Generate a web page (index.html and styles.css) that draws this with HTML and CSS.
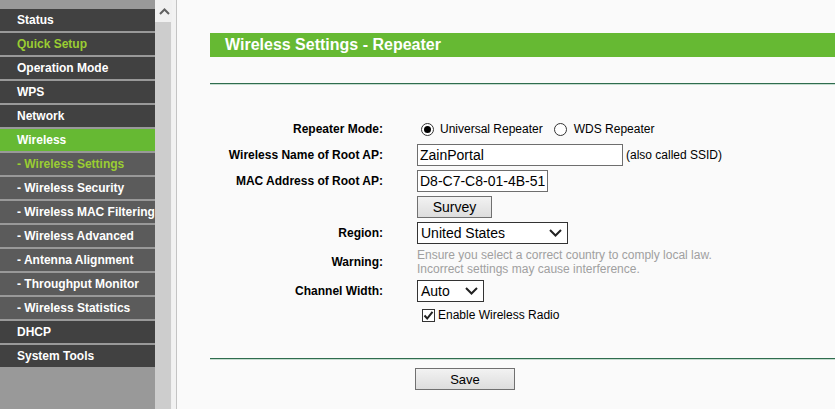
FILE: index.html
```html
<!DOCTYPE html>
<html lang="en">
<head>
  <meta charset="UTF-8" />
  <title>Wireless Settings - Repeater</title>
  <link rel="stylesheet" href="styles.css">
</head>
<body>
  <aside class="frame-left">
    <nav class="menu">
      <a class="item">Status</a>
      <a class="item hl">Quick Setup</a>
      <a class="item">Operation Mode</a>
      <a class="item">WPS</a>
      <a class="item">Network</a>
      <a class="item active">Wireless</a>
      <a class="item sub hl">- Wireless Settings</a>
      <a class="item sub">- Wireless Security</a>
      <a class="item sub">- Wireless MAC Filtering</a>
      <a class="item sub">- Wireless Advanced</a>
      <a class="item sub">- Antenna Alignment</a>
      <a class="item sub">- Throughput Monitor</a>
      <a class="item sub">- Wireless Statistics</a>
      <a class="item">DHCP</a>
      <a class="item">System Tools</a>
    </nav>
    <div class="scrollbar">
      <div class="scroll-up">
        <svg width="11" height="7" viewBox="0 0 11 7"><path d="M1 6 L5.5 1.5 L10 6" fill="none" stroke="#606060" stroke-width="2"/></svg>
      </div>
      <div class="scroll-thumb"></div>
    </div>
    <div class="frame-gap"></div>
  </aside>

  <main class="content">
    <h1 class="title">Wireless Settings - Repeater</h1>
    <div class="rule"></div>

    <form class="form">
      <label class="lbl">Repeater Mode:</label>
      <div class="ctl">
        <span class="radio checked"></span><span class="opt">Universal Repeater</span>
        <span class="radio second"></span><span class="opt">WDS Repeater</span>
      </div>

      <label class="lbl">Wireless Name of Root AP:</label>
      <div class="ctl">
        <input class="txt txt-name" type="text" value="ZainPortal" />
        <span class="note">(also called SSID)</span>
      </div>

      <label class="lbl">MAC Address of Root AP:</label>
      <div class="ctl">
        <input class="txt txt-mac" type="text" value="D8-C7-C8-01-4B-51" />
      </div>

      <span></span>
      <div class="ctl">
        <button type="button" class="btn btn-survey">Survey</button>
      </div>

      <label class="lbl">Region:</label>
      <div class="ctl">
        <div class="sel sel-region">
          <span>United States</span>
          <svg width="13" height="8" viewBox="0 0 13 8"><path d="M1 1 L6.5 6.5 L12 1" fill="none" stroke="#222" stroke-width="2"/></svg>
        </div>
      </div>

      <label class="lbl">Warning:</label>
      <div class="ctl warn">
        Ensure you select a correct country to comply local law.<br>
        Incorrect settings may cause interference.
      </div>

      <label class="lbl">Channel Width:</label>
      <div class="ctl">
        <div class="sel sel-width">
          <span>Auto</span>
          <svg width="13" height="8" viewBox="0 0 13 8"><path d="M1 1 L6.5 6.5 L12 1" fill="none" stroke="#222" stroke-width="2"/></svg>
        </div>
      </div>

      <span></span>
      <div class="ctl ctl-check">
        <span class="check">
          <svg width="11" height="11" viewBox="0 0 11 11"><path d="M1.5 5.5 L4.2 8.5 L9.5 1.8" fill="none" stroke="#222" stroke-width="2"/></svg>
        </span><span class="opt">Enable Wireless Radio</span>
      </div>
    </form>

    <div class="rule rule-bottom"></div>
    <div class="actions">
      <button type="button" class="btn btn-save">Save</button>
    </div>
  </main>
</body>
</html>
```

FILE: styles.css
```css
* {
  box-sizing: border-box;
}
html, body {
  height: 100%;
}
body {
  margin: 0;
  display: flex;
  overflow: hidden;
  background: #fafafa;
  font-family: "Liberation Sans", Arial, sans-serif;
  font-size: 12px;
  color: #000;
}

/* left frame */
.frame-left {
  display: flex;
  flex: 0 0 177px;
  border-right: 1px solid #c4c4c4;
}
.menu {
  width: 155px;
  background: #999;
  padding-top: 9px;
  display: flex;
  flex-direction: column;
  gap: 2px;
}
.item {
  display: block;
  height: 22px;
  line-height: 22px;
  padding-left: 17px;
  background: #414141;
  color: #fff;
  font-weight: bold;
  white-space: nowrap;
  overflow: hidden;
}
.item.sub {
  background: #5b5b5b;
}
.item.active {
  background: #66b933;
}
.item.hl {
  color: #9acd32;
}
.scrollbar {
  width: 17px;
  display: flex;
  flex-direction: column;
  background: #f0f0f0;
}
.scroll-up {
  height: 22px;
  display: flex;
  align-items: center;
  justify-content: center;
  padding-left: 1px;
}
.scroll-thumb {
  flex: 1;
  margin-right: 1px;
  background: #cdcdcd;
}
.frame-gap {
  width: 4px;
  background: #f2f2f2;
}

/* content */
.content {
  flex: 1;
  padding: 33px 0 0 33px;
}
.title {
  margin: 0;
  height: 24px;
  line-height: 24px;
  padding-left: 15px;
  background: #66b933;
  color: #fff;
  font-size: 16px;
  font-weight: bold;
}
.rule {
  margin-top: 26px;
  height: 2px;
  border-top: 1px solid #2f6c4e;
  border-bottom: 1px solid #c5dccf;
}
.form {
  display: grid;
  grid-template-columns: 173px 1fr;
  column-gap: 34px;
  row-gap: 4px;
  align-items: center;
  margin-top: 33px;
}
.lbl {
  text-align: right;
  font-weight: bold;
}
.ctl {
  display: flex;
  align-items: center;
  height: 22px;
}
.ctl-check {
  height: 18px;
}
.radio {
  width: 13px;
  height: 13px;
  border: 1px solid #333;
  border-radius: 50%;
  background: #fff;
  margin: 0 6px 0 4px;
  display: inline-flex;
  align-items: center;
  justify-content: center;
}
.radio.checked::after {
  content: "";
  width: 7px;
  height: 7px;
  border-radius: 50%;
  background: #000;
}
.radio.second {
  margin-left: 11px;
  margin-right: 7px;
}
.txt {
  height: 22px;
  border: 1px solid #6e6e6e;
  background: #fff;
  font-family: inherit;
  font-size: 14px;
  padding: 0 2px;
  color: #000;
}
.txt-name {
  width: 206px;
}
.txt-mac {
  width: 131px;
}
.note {
  margin-left: 3px;
}
.btn {
  height: 22px;
  border: 1px solid #707070;
  background: linear-gradient(#f2f2f2, #dddddd);
  font-family: inherit;
  color: #000;
  padding: 0;
}
.btn-survey {
  width: 75px;
  font-size: 14px;
}
.sel {
  height: 22px;
  border: 1px solid #333;
  background: #fff;
  display: flex;
  align-items: center;
  justify-content: space-between;
  padding: 0 5px 0 3px;
  font-size: 14px;
}
.sel-region {
  width: 151px;
}
.sel-width {
  width: 67px;
}
.warn {
  display: block;
  height: 28px;
  color: #a0a0a0;
  line-height: 14px;
}
.check {
  width: 13px;
  height: 13px;
  border: 1px solid #333;
  background: #fff;
  margin: 0 3px 0 5px;
  display: inline-flex;
  align-items: center;
  justify-content: center;
}
.rule-bottom {
  margin-top: 34px;
}
.actions {
  margin-top: 8px;
  padding-left: 205px;
}
.btn-save {
  width: 100px;
  font-size: 13px;
}
```
